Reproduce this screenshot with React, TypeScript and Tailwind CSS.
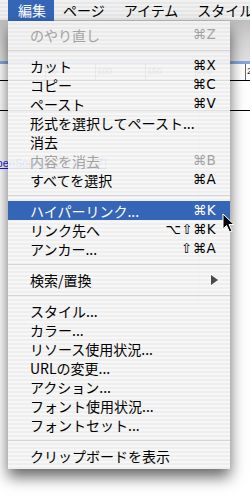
import React from "react";

type Item =
  | { sep: true }
  | { label: string; keys?: string; disabled?: boolean; active?: boolean; submenu?: boolean };

const items: Item[] = [
  { label: "のやり直し", keys: "⌘Z", disabled: true },
  { sep: true },
  { label: "カット", keys: "⌘X" },
  { label: "コピー", keys: "⌘C" },
  { label: "ペースト", keys: "⌘V" },
  { label: "形式を選択してペースト..." },
  { label: "消去" },
  { label: "内容を消去", keys: "⌘B", disabled: true },
  { label: "すべてを選択", keys: "⌘A" },
  { sep: true },
  { label: "ハイパーリンク...", keys: "⌘K", active: true },
  { label: "リンク先へ", keys: "⌥⇧⌘K" },
  { label: "アンカー...", keys: "⇧⌘A" },
  { sep: true },
  { label: "検索/置換", submenu: true },
  { sep: true },
  { label: "スタイル..." },
  { label: "カラー..." },
  { label: "リソース使用状況..." },
  { label: "URLの変更..." },
  { label: "アクション..." },
  { label: "フォント使用状況..." },
  { label: "フォントセット..." },
  { sep: true },
  { label: "クリップボードを表示" },
];

const menus = ["ページ", "アイテム", "スタイル"];
const ruler = ["", "50", "100", "150", "200", "250"];

function MenuRow({ item }: { item: Item }) {
  if ("sep" in item) {
    return (
      <div className="h-[12px] flex items-center">
        <div className="h-px w-full bg-[#d4d4d4]" />
      </div>
    );
  }
  const color = item.active
    ? "bg-[#3565b6] text-white"
    : item.disabled
      ? "text-[#a2a2a2]"
      : "text-black";
  return (
    <div className={`h-[19px] flex items-center justify-between pl-[22px] pr-[14px] ${color}`}>
      <span className="text-[14px] leading-[19px] pt-[1px]">{item.label}</span>
      {item.keys && (
        <span className="font-['DejaVu_Sans','Noto_Sans_CJK_JP',sans-serif] text-[13.5px] leading-[19px] tracking-[0.3px]">
          {item.keys}
        </span>
      )}
      {item.submenu && (
        <svg width="7" height="10" viewBox="0 0 7 10" className="mr-[-2px]">
          <polygon points="0,0 7,5 0,10" fill="#4a4a4a" />
        </svg>
      )}
    </div>
  );
}

export default function App() {
  return (
    <div className="relative w-[250px] h-[496px] overflow-hidden bg-white font-['Noto_Sans_CJK_JP','DejaVu_Sans',sans-serif]">
      {/* Menu bar */}
      <div className="h-[21px] flex items-center bg-[image:repeating-linear-gradient(180deg,#f1f1f1_0px,#f1f1f1_2px,#e7e7e7_2px,#e7e7e7_4px)] border-b border-[#bdbdbd] whitespace-nowrap">
        <div className="shrink-0 ml-[8px] h-[21px] w-[46px] pl-[10px] flex items-center bg-[#3565b6] text-white text-[14px]">
          編集
        </div>
        {menus.map((m) => (
          <div key={m} className="shrink-0 pl-[9px] pr-[10px] h-[21px] flex items-center text-[14px] text-black">
            {m}
          </div>
        ))}
      </div>

      {/* Page behind the menu */}
      <div className="h-[40px] bg-[linear-gradient(180deg,#bfbfbf,#d2d2d2_45%,#e0e0e0)]" />
      <div className="h-[3px] bg-[#86a6dc]" />
      <div className="h-[17px] flex items-end ml-[-5px] border-b border-black font-['Liberation_Sans',sans-serif] text-[9px] text-[#333]">
        {ruler.map((n, i) => (
          <div key={i} className="w-[50px] shrink-0 h-full border-l border-[#666] pl-[1px] leading-[14px]">
            {n}
          </div>
        ))}
      </div>
      <div className="h-[30px] border-b border-black" />
      <div className="flex">
        <div className="w-[199px] h-[190px] border-r border-[#cfcfcf] pt-[37px]">
          <span className="ml-[-12px] font-['Liberation_Sans','Noto_Sans_CJK_JP',sans-serif] text-[11px] text-[#1a1aee] underline">
            OpenSourceにジャンプ!
          </span>
        </div>
      </div>

      {/* Dropdown */}
      <div className="absolute left-[8px] top-[21px] w-[222px] py-[4px] bg-[image:repeating-linear-gradient(180deg,rgba(246,246,246,0.92)_0px,rgba(246,246,246,0.92)_2px,rgba(237,237,237,0.92)_2px,rgba(237,237,237,0.92)_4px)] shadow-[0_8px_14px_rgba(0,0,0,0.6)] whitespace-nowrap">
        {items.map((it, i) => (
          <MenuRow key={i} item={it} />
        ))}
      </div>

      {/* Cursor */}
      <svg className="absolute left-[222px] top-[213px]" width="13" height="20" viewBox="0 0 13 20">
        <path d="M1 1 L1 16 L4.5 12.5 L7.5 19 L10 18 L7 11.5 L12 11.5 Z" fill="#000" stroke="#fff" strokeWidth="1" />
      </svg>
    </div>
  );
}
